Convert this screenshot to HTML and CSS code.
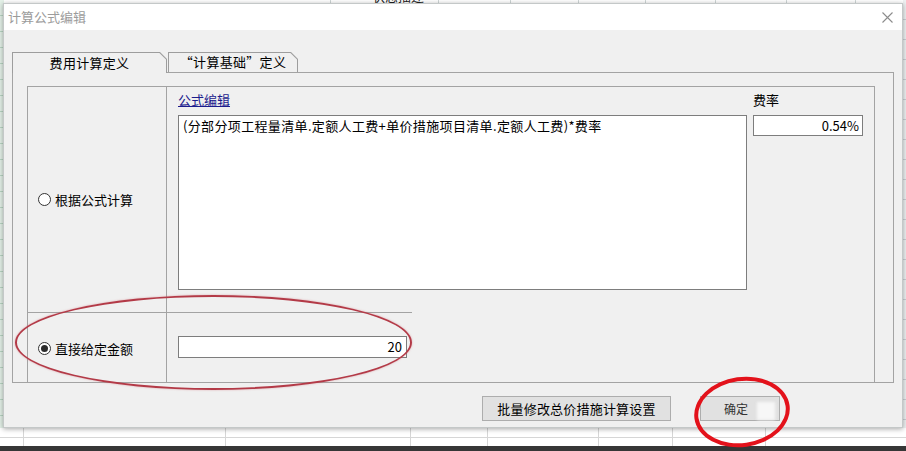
FILE: index.html
```html
<!DOCTYPE html>
<html lang="zh-CN">
<head>
<meta charset="utf-8">
<title>计算公式编辑</title>
<link rel="stylesheet" href="styles.css">
</head>
<body>
<div class="screen">
  <div class="topstrip"><span class="peek">状态描述</span></div>
  <div class="dialog">
    <div class="titlebar">
      <span class="title">计算公式编辑</span>
      <svg class="close" width="11" height="11" viewBox="0 0 11 11"><path d="M0.5 0.5 L10.5 10.5 M10.5 0.5 L0.5 10.5" stroke="#8c8c8c" stroke-width="1.1" fill="none"/></svg>
    </div>
    <div class="content">
      <div class="tabs">
        <div class="tab tab-active"><div class="tab-in">费用计算定义</div></div>
        <div class="tab tab-second"><div class="tab-in">“计算基础”定义</div></div>
      </div>
      <div class="panel">
        <div class="group">
          <div class="cell cell-left cell-top">
            <span class="radio"><span class="circle"></span>根据公式计算</span>
          </div>
          <div class="cell cell-right cell-top">
            <div class="formula-col">
              <div class="field-label"><a class="link">公式编辑</a></div>
              <div class="formula">(分部分项工程量清单.定额人工费+单价措施项目清单.定额人工费)*费率</div>
            </div>
            <div class="rate-col">
              <div class="field-label">费率</div>
              <div class="rate">0.54%</div>
            </div>
          </div>
          <div class="cell cell-left cell-bottom">
            <span class="radio"><span class="circle checked"></span>直接给定金额</span>
          </div>
          <div class="cell cell-right cell-bottom">
            <div class="amount-wrap"><div class="amount">20</div></div>
          </div>
        </div>
      </div>
      <div class="footer">
        <button class="btn btn-wide">批量修改总价措施计算设置</button>
        <button class="btn btn-ok">确定</button>
      </div>
    </div>
  </div>
  <div class="sheet-bottom"></div>
  <div class="taskbar"></div>
  <div class="smudge"></div>
  <div class="ring ring-one"></div>
  <div class="ring ring-two"></div>
</div>
</body>
</html>
```

FILE: styles.css
```css
* { box-sizing: border-box; }
html, body { margin: 0; padding: 0; }
body {
  width: 906px;
  height: 451px;
  overflow: hidden;
  font-family: "Noto Sans CJK SC", "Liberation Sans", sans-serif;
  font-size: 13px;
  color: #000;
  background: #fff;
}
.screen {
  position: relative;
  width: 906px;
  height: 451px;
  display: flex;
  flex-direction: column;
  background:
    repeating-linear-gradient(to bottom, transparent 0 15px, #b9d6c4 15px 16px) 0 0 / 4px 100% no-repeat,
    linear-gradient(#e4f1e8, #e4f1e8) 0 0 / 4px 100% no-repeat,
    repeating-linear-gradient(to bottom, transparent 0 19px, #c9d0d4 19px 20px) 903px 0 / 3px 100% no-repeat,
    linear-gradient(#eef1f2, #eef1f2) 903px 0 / 3px 100% no-repeat,
    #fff;
}
.topstrip {
  height: 3px;
  flex: none;
  overflow: hidden;
  position: relative;
  background:
    linear-gradient(#cfd6d6, #cfd6d6) 330px 0 / 1px 100% no-repeat,
    linear-gradient(#cfd6d6, #cfd6d6) 438px 0 / 1px 100% no-repeat,
    linear-gradient(#cfd6d6, #cfd6d6) 510px 0 / 1px 100% no-repeat,
    linear-gradient(#cfd6d6, #cfd6d6) 578px 0 / 1px 100% no-repeat,
    linear-gradient(#cfd6d6, #cfd6d6) 645px 0 / 1px 100% no-repeat,
    linear-gradient(#cfd6d6, #cfd6d6) 715px 0 / 1px 100% no-repeat,
    linear-gradient(#cfd6d6, #cfd6d6) 786px 0 / 1px 100% no-repeat,
    linear-gradient(#cfd6d6, #cfd6d6) 855px 0 / 1px 100% no-repeat;
}
.peek {
  display: block;
  margin-left: 372px;
  margin-top: -11px;
  line-height: 14px;
  font-size: 13px;
  color: #222;
}
.dialog {
  flex: none;
  margin-left: 3px;
  width: 900px;
  height: 425px;
  border: 1px solid #c4c8c8;
  box-shadow: 0 1px 5px rgba(0, 0, 0, 0.35);
  display: flex;
  flex-direction: column;
  background: #f0f0f0;
  position: relative;
  z-index: 1;
}
.titlebar {
  height: 26px;
  flex: none;
  background: #fff;
  display: flex;
  align-items: center;
  justify-content: space-between;
  padding: 0 9px 0 4px;
}
.title {
  color: #9c9c9c;
  font-size: 13px;
  line-height: 16px;
}
.close { display: block; }
.content {
  flex: 1;
  display: flex;
  flex-direction: column;
  padding-top: 22px;
}
.tabs {
  display: flex;
  align-items: flex-end;
  gap: 1px;
  padding-left: 8px;
  height: 20px;
  position: relative;
  z-index: 2;
}
.tab {
  background: #9d9d9d;
  padding: 1px 1px 0 1px;
  clip-path: polygon(0 0, calc(100% - 7px) 0, 100% 7px, 100% 100%, 0 100%);
}
.tab-in {
  height: 100%;
  background: #f0f0f0;
  clip-path: polygon(0 0, calc(100% - 6.6px) 0, 100% 6.6px, 100% 100%, 0 100%);
  display: flex;
  align-items: center;
  justify-content: center;
  font-size: 13px;
  line-height: 16px;
  padding-bottom: 1px;
  letter-spacing: 0.3px;
}
.tab-active {
  width: 155px;
  height: 21px;
  margin-bottom: -1px;
}
.tab-second {
  width: 130px;
  height: 20px;
}
.panel {
  margin: 0 8px 0 8px;
  height: 311px;
  border: 1px solid #a3a3a3;
  padding: 13px 18px 0 14px;
  display: flex;
  flex-direction: column;
}
.group {
  flex: 1;
  border: 1px solid #a3a3a3;
  border-bottom: none;
  display: grid;
  grid-template-columns: 139px 1fr;
  grid-template-rows: 225px 1fr;
}
.cell-left {
  border-right: 1px solid #a3a3a3;
  display: flex;
  align-items: center;
  padding-left: 10px;
}
.cell-left.cell-bottom {
  border-top: 1px solid #a3a3a3;
  padding-top: 2px;
}
.radio {
  display: flex;
  align-items: center;
  gap: 4px;
  line-height: 16px;
  font-size: 13px;
}
.circle {
  width: 13px;
  height: 13px;
  border-radius: 50%;
  border: 1px solid #333;
  background: #fff;
  display: flex;
  align-items: center;
  justify-content: center;
}
.circle.checked::after {
  content: "";
  width: 7px;
  height: 7px;
  border-radius: 50%;
  background: #2b2b2b;
}
.cell-right.cell-top {
  display: flex;
  padding-left: 11px;
  gap: 6px;
}
.field-label {
  height: 28px;
  padding-top: 5px;
  line-height: 16px;
  font-size: 13px;
}
.link {
  color: #1c1c8e;
  text-decoration: underline;
  cursor: pointer;
}
.formula {
  width: 569px;
  height: 175px;
  background: #fff;
  border: 1px solid #7d7d7d;
  padding: 2px 4px;
  line-height: 16px;
  font-size: 13px;
  letter-spacing: 0.35px;
  white-space: nowrap;
}
.rate {
  width: 110px;
  height: 21px;
  background: #fff;
  border: 1px solid #7d7d7d;
  text-align: right;
  padding: 0 3px;
  line-height: 19px;
  font-size: 13px;
}
.amount-wrap {
  width: 245px;
  height: 100%;
  border-top: 1px solid #a3a3a3;
  padding: 23px 6px 0 11px;
}
.amount {
  width: 229px;
  height: 22px;
  background: #fff;
  border: 1px solid #7d7d7d;
  text-align: right;
  padding: 0 4px;
  line-height: 20px;
  font-size: 13px;
}
.footer {
  display: flex;
  justify-content: flex-end;
  gap: 29px;
  padding: 13px 122px 0 0;
}
.btn {
  height: 25px;
  background: #e1e1e1;
  border: 1px solid #adadad;
  font-family: "Noto Sans CJK SC", "Liberation Sans", sans-serif;
  font-size: 13px;
  line-height: 16px;
  color: #000;
  padding: 0;
}
.btn-wide { width: 189px; letter-spacing: 0.2px; }
.btn-ok { width: 80px; color: #333; font-size: 12px; padding-right: 8px; }
.sheet-bottom {
  height: 18px;
  flex: none;
  background:
    linear-gradient(#d6d6d6, #d6d6d6) 0 9px / 100% 1px no-repeat,
    linear-gradient(#d6d6d6, #d6d6d6) 23px 0 / 1px 100% no-repeat,
    linear-gradient(#d6d6d6, #d6d6d6) 225px 0 / 1px 100% no-repeat,
    linear-gradient(#d6d6d6, #d6d6d6) 410px 0 / 1px 100% no-repeat,
    linear-gradient(#d6d6d6, #d6d6d6) 487px 0 / 1px 100% no-repeat,
    linear-gradient(#d6d6d6, #d6d6d6) 598px 0 / 1px 100% no-repeat,
    linear-gradient(#d6d6d6, #d6d6d6) 672px 0 / 1px 100% no-repeat,
    linear-gradient(#d6d6d6, #d6d6d6) 765px 0 / 1px 100% no-repeat,
    #fff;
}
.taskbar {
  flex: 1;
  background: #363636;
}
.smudge {
  position: absolute;
  left: 757px;
  top: 402px;
  width: 18px;
  height: 18px;
  background: rgba(250, 250, 250, 0.9);
  filter: blur(1.5px);
  z-index: 3;
}
.ring {
  position: absolute;
  border-radius: 50%;
  z-index: 4;
  pointer-events: none;
}
.ring-one {
  left: 15px;
  top: 295px;
  width: 397px;
  height: 95px;
  border: 2px solid #b33a47;
  box-shadow: 0 0 2px rgba(210, 110, 120, 0.6);
}
.ring-two {
  left: 694px;
  top: 377px;
  width: 96px;
  height: 70px;
  border: 4px solid #e3121b;
  transform: rotate(-8deg);
}
```
